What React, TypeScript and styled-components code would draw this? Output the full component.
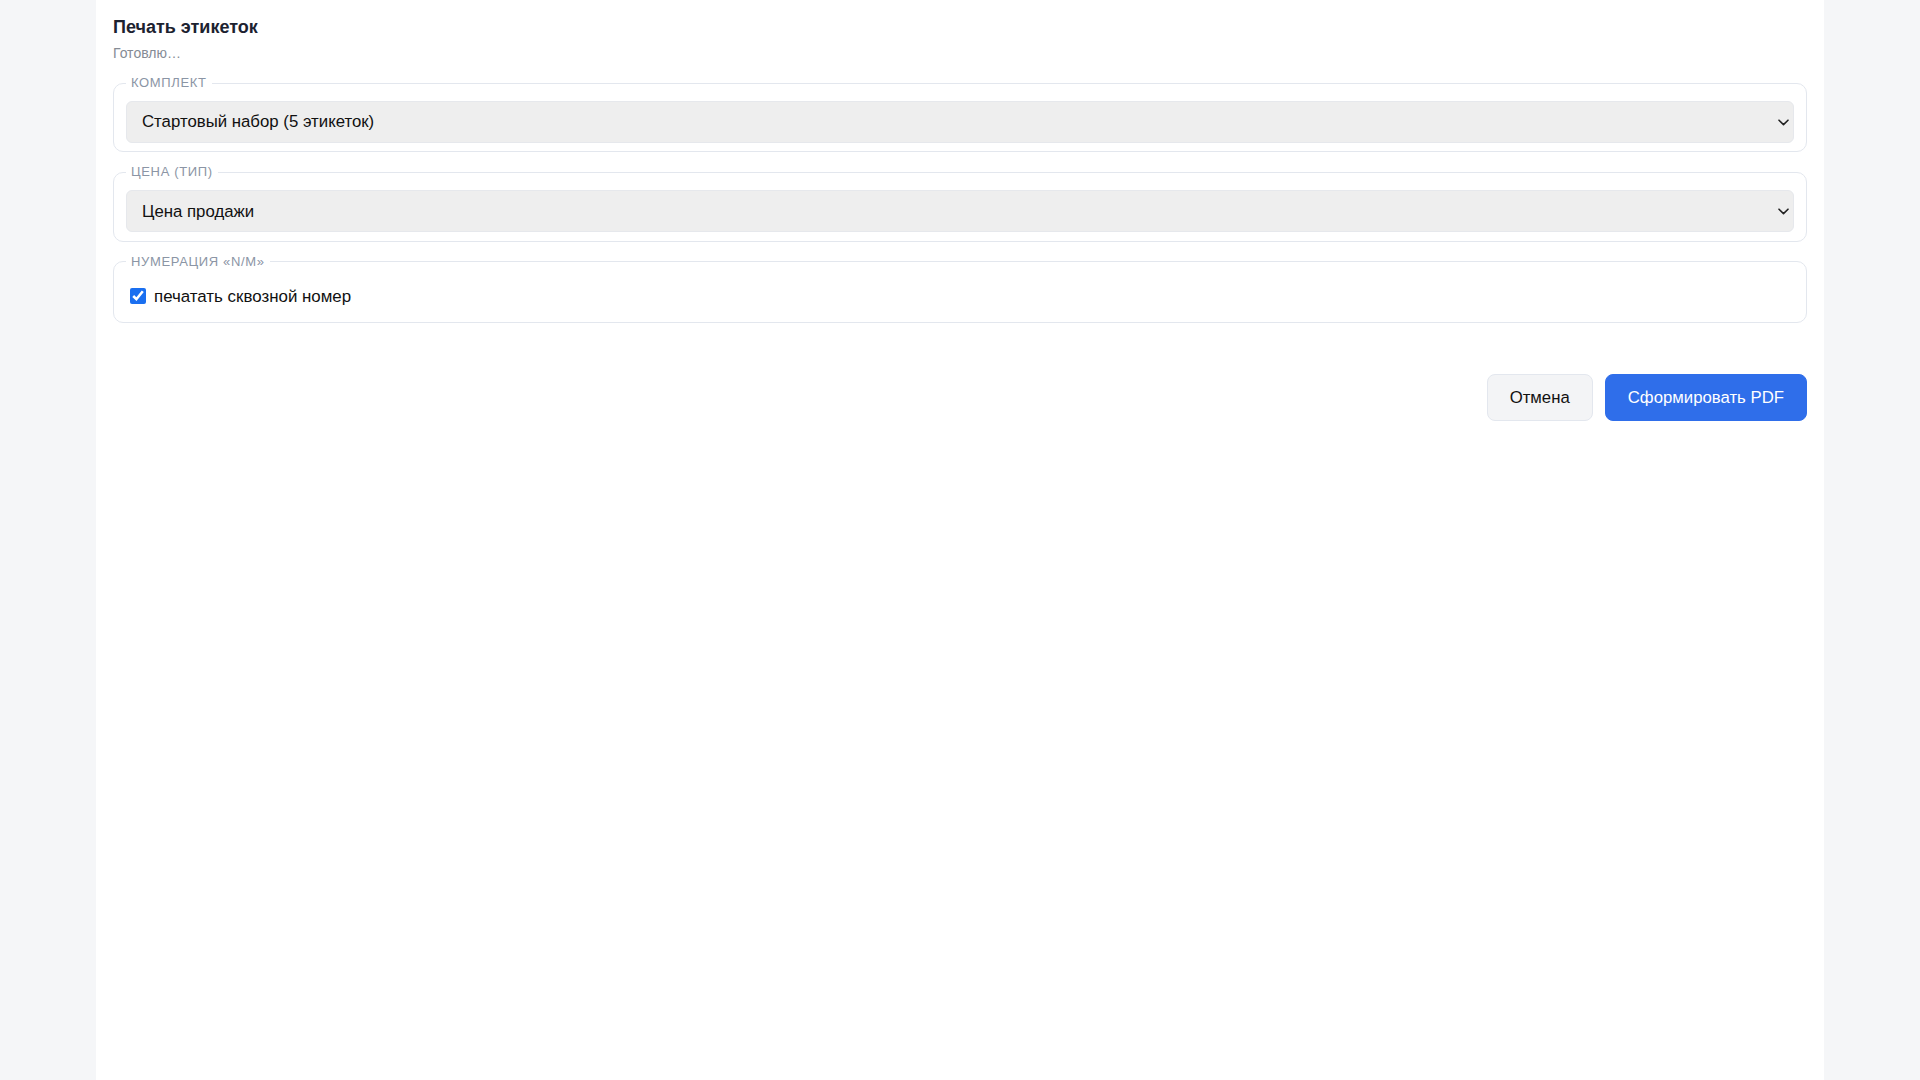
import React, { useState } from "react";
import styled, { createGlobalStyle } from "styled-components";

const Global = createGlobalStyle`
  html, body { margin: 0; padding: 0; background: #f5f6f8; }
  body { font-family: "Liberation Sans", Arial, sans-serif; color: #111; }
  * { box-sizing: border-box; }
`;

const Page = styled.div`
  min-height: 100vh;
  display: flex;
  justify-content: center;
`;

const Panel = styled.main`
  width: 1728px;
  min-height: 100vh;
  background: #ffffff;
  padding: 17px 17px 24px;
  display: flex;
  flex-direction: column;
`;

const Title = styled.h1`
  margin: 0;
  font-size: 18px;
  line-height: 1.2;
  font-weight: 700;
  color: #1c2230;
`;

const Status = styled.div`
  margin-top: 6px;
  font-size: 14px;
  line-height: 1.2;
  color: #858b95;
`;

const Fields = styled.div`
  margin-top: 14px;
  display: flex;
  flex-direction: column;
  gap: 12px;
`;

const Group = styled.fieldset`
  margin: 0;
  min-width: 0;
  border: 1px solid #e3e7ee;
  border-radius: 10px;
  padding: 10px 12px 8.5px;
`;

const Legend = styled.legend`
  padding: 0 5px;
  margin-left: 0;
  font-size: 13px;
  line-height: 1.2;
  letter-spacing: 0.05em;
  text-transform: uppercase;
  color: #8b95a5;
`;

const SelectWrap = styled.div`
  position: relative;
`;

const Select = styled.select`
  appearance: none;
  -webkit-appearance: none;
  width: 100%;
  height: 42px;
  padding: 0 36px 0 15px;
  font-family: "Liberation Sans", Arial, sans-serif;
  font-size: 16.8px;
  color: #111;
  background: #eeeeee;
  border: 1px solid #e6e8ec;
  border-radius: 6px;
  outline: none;
`;

const Chevron = styled.svg`
  position: absolute;
  right: 5px;
  top: 50%;
  width: 11px;
  height: 7px;
  margin-top: -3px;
  pointer-events: none;
`;

const CheckRow = styled.label`
  display: flex;
  align-items: flex-start;
  gap: 8px;
  padding: 6px 0 4.5px;
  font-size: 16.9px;
  line-height: 24px;
  color: #111;
`;

const Check = styled.input`
  width: 16px;
  height: 16px;
  margin: 3px 0 0 4px;
  accent-color: #1a6ff0;
`;

const Actions = styled.div`
  margin-top: 51px;
  display: flex;
  justify-content: flex-end;
  gap: 12px;
`;

const Button = styled.button<{ $primary?: boolean }>`
  height: 47px;
  padding: 0 22px;
  border-radius: 8px;
  font-family: "Liberation Sans", Arial, sans-serif;
  font-size: 16.75px;
  cursor: pointer;
  border: 1px solid ${(p) => (p.$primary ? "#2f6eea" : "#e3e7ee")};
  background: ${(p) => (p.$primary ? "#2f6eea" : "#f3f4f6")};
  color: ${(p) => (p.$primary ? "#ffffff" : "#111111")};
`;

const ChevronIcon = () => (
  <Chevron viewBox="0 0 11 7" fill="none">
    <path d="M1 1.2 L5.5 5.6 L10 1.2" stroke="#222" strokeWidth="1.6" strokeLinecap="round" strokeLinejoin="round" />
  </Chevron>
);

export default function App() {
  const [kit, setKit] = useState("start");
  const [price, setPrice] = useState("sale");
  const [numbering, setNumbering] = useState(true);

  return (
    <>
      <Global />
      <Page>
        <Panel>
          <Title>Печать этикеток</Title>
          <Status>Готовлю…</Status>
          <Fields>
            <Group>
              <Legend>Комплект</Legend>
              <SelectWrap>
                <Select value={kit} onChange={(e) => setKit(e.target.value)}>
                  <option value="start">Стартовый набор (5 этикеток)</option>
                </Select>
                <ChevronIcon />
              </SelectWrap>
            </Group>
            <Group>
              <Legend>Цена (тип)</Legend>
              <SelectWrap>
                <Select value={price} onChange={(e) => setPrice(e.target.value)}>
                  <option value="sale">Цена продажи</option>
                </Select>
                <ChevronIcon />
              </SelectWrap>
            </Group>
            <Group>
              <Legend>Нумерация «N/M»</Legend>
              <CheckRow>
                <Check
                  type="checkbox"
                  checked={numbering}
                  onChange={(e) => setNumbering(e.target.checked)}
                />
                печатать сквозной номер
              </CheckRow>
            </Group>
          </Fields>
          <Actions>
            <Button>Отмена</Button>
            <Button $primary>Сформировать PDF</Button>
          </Actions>
        </Panel>
      </Page>
    </>
  );
}
